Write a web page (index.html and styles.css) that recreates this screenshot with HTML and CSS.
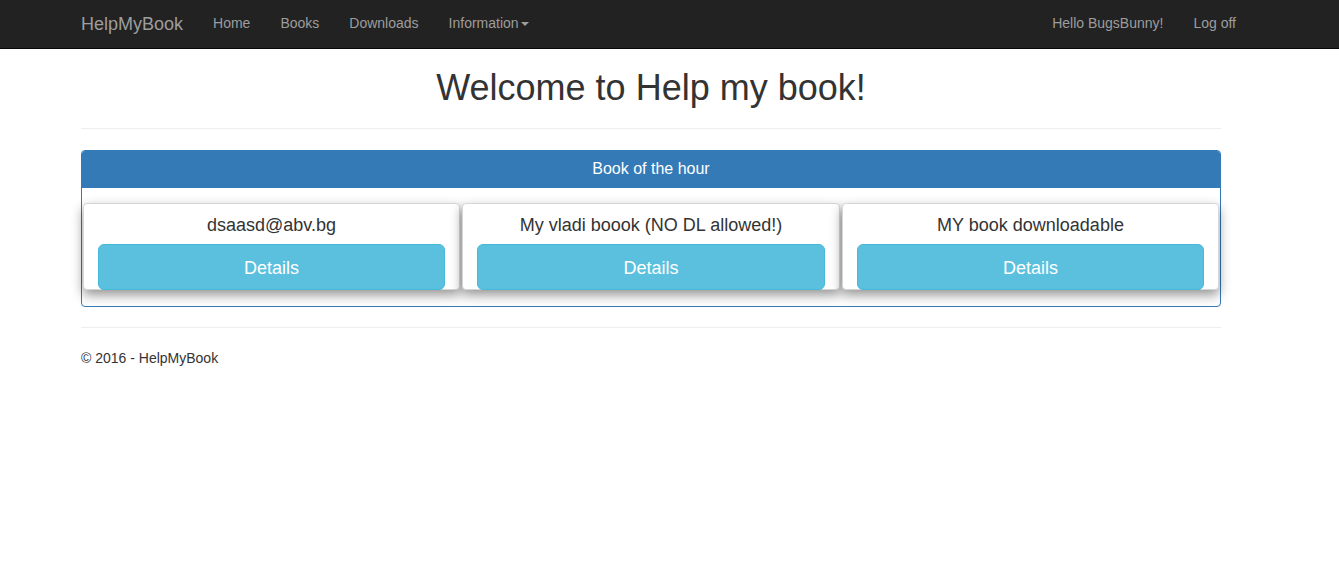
FILE: index.html
```html
<!DOCTYPE html>
<html lang="en">
<head>
<meta charset="utf-8">
<title>HelpMyBook</title>
<link rel="stylesheet" href="styles.css">
</head>
<body>
<header class="navbar">
  <div class="nav-inner">
    <a class="brand" href="#">HelpMyBook</a>
    <ul class="nav">
      <li><a href="#">Home</a></li>
      <li><a href="#">Books</a></li>
      <li><a href="#">Downloads</a></li>
      <li><a href="#">Information<span class="caret"></span></a></li>
    </ul>
    <ul class="nav nav-right">
      <li><a href="#">Hello BugsBunny!</a></li>
      <li><a href="#">Log off</a></li>
    </ul>
  </div>
</header>
<main class="container">
  <h1 class="title">Welcome to Help my book!</h1>
  <hr class="rule">
  <section class="panel">
    <div class="panel-heading">Book of the hour</div>
    <div class="panel-body">
      <div class="book-card">
        <div class="book-title">dsaasd@abv.bg</div>
        <a class="btn-details" href="#">Details</a>
      </div>
      <div class="book-card">
        <div class="book-title">My vladi boook (NO DL allowed!)</div>
        <a class="btn-details" href="#">Details</a>
      </div>
      <div class="book-card">
        <div class="book-title">MY book downloadable</div>
        <a class="btn-details" href="#">Details</a>
      </div>
    </div>
  </section>
  <hr class="rule footer-rule">
  <footer class="footer">© 2016 - HelpMyBook</footer>
</main>
</body>
</html>
```
FILE: styles.css
```css
* { box-sizing: border-box; }
html, body { margin: 0; padding: 0; }
body {
  font-family: "Liberation Sans", Arial, Helvetica, sans-serif;
  font-size: 14px;
  line-height: 1.42857;
  color: #333;
  background: #fff;
}
a { text-decoration: none; }

.navbar {
  background: #222;
  border-bottom: 1px solid #080808;
  height: 49px;
}
.nav-inner {
  width: 1185px;
  margin-left: 66px;
  height: 48px;
  display: flex;
  align-items: center;
}
.brand {
  color: #9d9d9d;
  font-size: 18px;
  line-height: 20px;
  padding: 0 15px;
}
.nav {
  list-style: none;
  margin: 0;
  padding: 0;
  display: flex;
}
.nav a {
  display: block;
  color: #9d9d9d;
  padding: 0 15px;
  line-height: 20px;
  position: relative;
  top: -1px;
}
.nav-right { margin-left: auto; }
.caret {
  display: inline-block;
  width: 0;
  height: 0;
  margin-left: 2px;
  vertical-align: middle;
  border-top: 4px solid #9d9d9d;
  border-left: 4px solid transparent;
  border-right: 4px solid transparent;
}

.container {
  width: 1140px;
  margin-left: 81px;
}
.title {
  margin: 19px 0 0;
  font-size: 36px;
  font-weight: 500;
  line-height: 40px;
  text-align: center;
  color: #333;
}
.rule {
  border: 0;
  border-top: 1px solid #eee;
  margin: 20px 0 0;
}
.panel {
  margin-top: 21px;
  border: 1px solid #337ab7;
  border-radius: 4px;
}
.panel-heading {
  background: #337ab7;
  color: #fff;
  font-size: 16px;
  height: 37px;
  line-height: 36px;
  text-align: center;
  border-radius: 3px 3px 0 0;
}
.panel-body {
  padding: 15px 1px 16px;
  display: grid;
  grid-template-columns: 377px 378px 377px;
  gap: 2px;
}
.book-card {
  background: #fff;
  border: 1px solid #d6d6d6;
  border-radius: 4px;
  box-shadow: 0 5px 12px rgba(0,0,0,0.42);
  padding: 9px 14px 0;
  text-align: center;
  height: 87px;
}
.book-title {
  font-size: 18px;
  line-height: 24px;
  color: #333;
  margin-bottom: 7px;
}
.btn-details {
  display: block;
  background: #5bc0de;
  border: 1px solid #46b8da;
  border-radius: 6px;
  color: #fff;
  font-size: 18px;
  line-height: 24px;
  padding: 11px 16px 9px;
  height: 46px;
}
.footer-rule { margin-top: 20px; }
.footer {
  margin-top: 20px;
  line-height: 20px;
  color: #333;
}
```
